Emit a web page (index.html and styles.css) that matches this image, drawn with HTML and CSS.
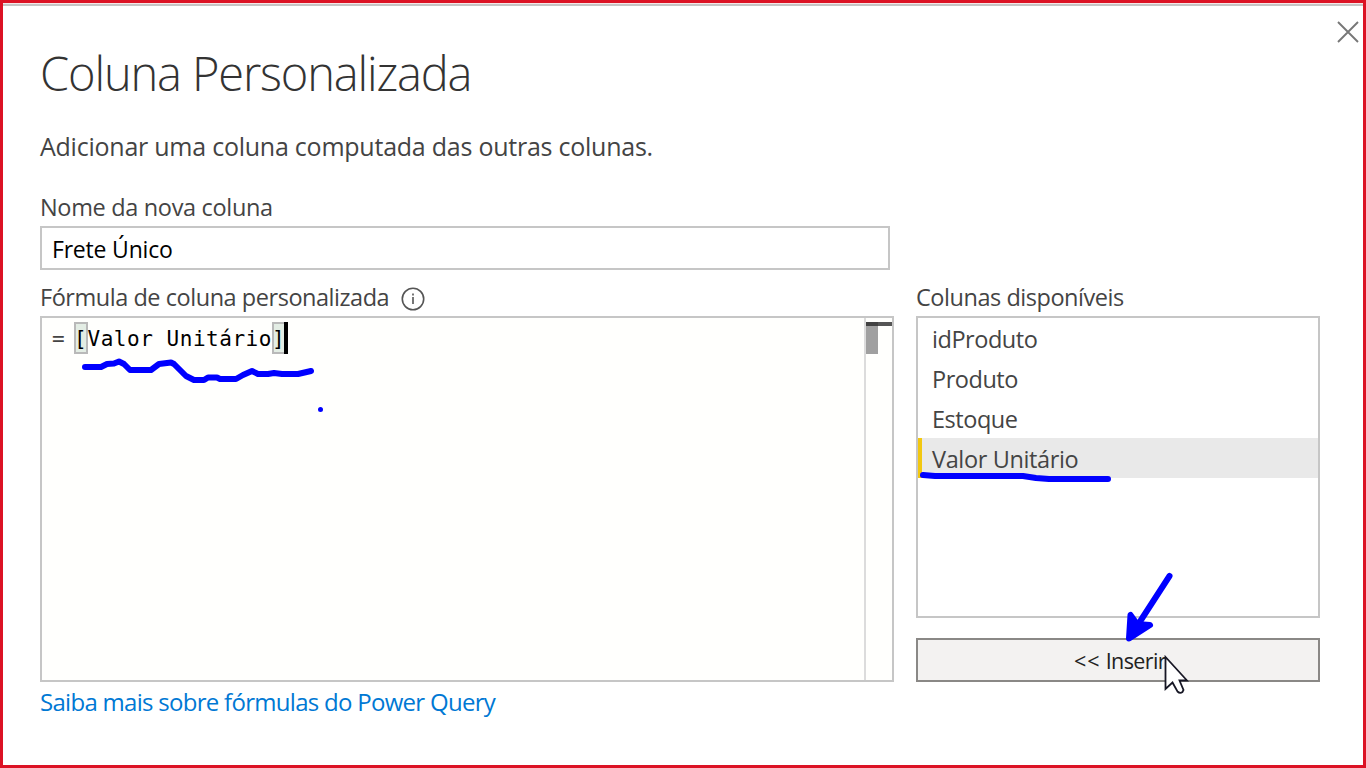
FILE: index.html
```html
<!DOCTYPE html>
<html lang="pt-BR">
<head>
<meta charset="utf-8">
<title>Coluna Personalizada</title>
<link rel="stylesheet" href="styles.css">
</head>
<body>
<main class="dialog">
  <div class="top-line"></div>
  <button class="close" aria-label="Fechar"><svg width="24" height="24" viewBox="0 0 24 24"><path d="M2 2L22 22M22 2L2 22"/></svg></button>
  <h1 class="title"><span>Coluna Personalizada</span></h1>
  <p class="subtitle"><span>Adicionar uma coluna computada das outras colunas.</span></p>
  <label class="label name-label" for="name"><span>Nome da nova coluna</span></label>
  <div class="input" id="name"><span>Frete Único</span></div>
  <div class="columns">
    <section class="formula">
      <div class="label formula-label"><span>Fórmula de coluna personalizada</span>
        <svg class="info" width="24" height="24" viewBox="0 0 24 24"><circle cx="12" cy="12" r="10.7"/><path d="M12 10v7M12 6.5v2"/></svg>
      </div>
      <div class="editor">
        <div class="code"><span class="equals">=</span><span class="bracket">[</span><span>Valor Unitário</span><span class="bracket">]</span><i class="caret"></i></div>
        <div class="scrollbar"><div class="mark"></div><div class="thumb"></div></div>
      </div>
      <a class="link"><span>Saiba mais sobre fórmulas do Power Query</span></a>
    </section>
    <section class="available">
      <div class="label available-label"><span>Colunas disponíveis</span></div>
      <ul class="list">
        <li class="item"><span>idProduto</span></li>
        <li class="item"><span>Produto</span></li>
        <li class="item"><span>Estoque</span></li>
        <li class="item selected"><span>Valor Unitário</span></li>
      </ul>
      <button class="insert"><span class="arrows">&lt;&lt;</span> <span>Inserir</span></button>
    </section>
  </div>
  <svg class="ink" width="1366" height="768" viewBox="0 0 1366 768">
    <path d="M85 367H101L107 364L114 363.500L119 361.500L124 364L130 370H151L159 364L171 362.500L174 364L186 376L194 380H204L208 377.500H217L220 379H236L243 375L252 371L258 374H268L274 373L282 374H298L311 371"/>
    <path d="M923 475L935 476H1023L1036 478L1049 479H1108"/>
    <path d="M1169.500 576L1130 637"/>
    <path class="head" d="M1130.500 615L1129 638.500L1150 625L1137 624Z"/>
    <circle cx="320.500" cy="409.500" r="2.500"/>
    <path class="pointer" d="M1165.500 657V689L1172.500 682.500L1177.500 691.500Q1180 694 1182.500 692L1183.500 690L1179.500 680.500H1187Z"/>
  </svg>
</main>
</body>
</html>
```
FILE: styles.css
```css
* { box-sizing: border-box; }
body { margin: 0; background: #fff; font-family: "Open Sans", "Noto Sans", sans-serif; color: #444; overflow: hidden; }
button { font: inherit; margin: 0; padding: 0; }
svg { display: block; }
.dialog { position: relative; width: 1366px; height: 768px; border: 3px solid #dc1224; padding: 0 43px 0 37px; white-space: nowrap; }
.top-line { height: 3px; margin: 0 -43px 0 -37px; border-top: 1px solid #f5e8e8; background: #c6c4c4; }
.close { position: absolute; top: 17px; right: 3px; width: 24px; height: 24px; border: 0; background: none; }
.close path { fill: none; stroke: #777; stroke-width: 1.9; }
.title { margin: 37px 0 0; height: 86px; font-size: 47px; font-weight: 300; line-height: 60px; letter-spacing: -1.15px; color: #333; }
.subtitle { margin: 0; height: 61px; font-size: 25px; line-height: 34px; letter-spacing: -.24px; }
.label { display: flex; height: 36px; font-size: 23.5px; line-height: 34px; letter-spacing: -.46px; }
.name-label { letter-spacing: -.33px; }
.input { width: 850px; height: 44px; border: 2px solid #c6c6c6; padding-left: 10px; font-size: 23px; line-height: 42px; letter-spacing: -.2px; color: #000; }
.columns { display: flex; gap: 22px; margin-top: 10px; }
.formula { width: 854px; }
.info { margin: 7px 0 0 12px; fill: none; stroke: #555; stroke-width: 1.6; }
.editor { display: flex; height: 366px; border: 2px solid #c6c6c6; background: #fffffd; }
.code { display: flex; flex: 1; padding: 4px 0 0 10px; font-family: "DejaVu Sans Mono", monospace; font-size: 21px; line-height: 34px; letter-spacing: .53px; color: #000; height: 36px; }
.equals { width: 22px; color: #444; }
.bracket { width: 14px; height: 32px; margin-right: -.5px; background: #e3ede4; box-shadow: inset 0 0 0 2px #b9b9b9; }
.caret { width: 4px; height: 32px; margin-left: -1.5px; background: #000; }
.scrollbar { width: 28px; border-left: 2px solid #dcdcdc; padding-top: 4px; }
.mark { height: 4px; background: linear-gradient(90deg, #424242 12px, #555 12px); }
.thumb { width: 12px; height: 28px; background: #a0a0a0; }
.link { display: block; font-size: 24px; line-height: 39px; letter-spacing: -.71px; color: #0078d4; }
.available { width: 404px; }
.list { height: 302px; margin: 0; padding: 0; border: 2px solid #c6c6c6; list-style: none; }
.item { height: 40px; padding-left: 14px; font-size: 23.5px; line-height: 42px; letter-spacing: -.46px; }
.selected { border-left: 4px solid #f2c811; padding-left: 10px; background: #e9e9e9; letter-spacing: -.36px; }
.insert { display: block; width: 404px; height: 44px; margin-top: 20px; border: 2px solid #8a8886; padding-left: 4px; background: #f3f2f1; color: #222; font-size: 21.5px; line-height: 39px; letter-spacing: -.6px; text-align: center; }
.arrows { letter-spacing: 1px; }
.ink { position: absolute; top: -3px; left: -3px; pointer-events: none; }
.ink path { fill: none; stroke: #00f; stroke-width: 6; stroke-linecap: round; stroke-linejoin: round; }
.ink circle { fill: #00f; }
.ink .head { fill: #00f; }
.ink .pointer { fill: #fff; stroke: #171725; stroke-width: 1.8; stroke-linejoin: miter; }
```
